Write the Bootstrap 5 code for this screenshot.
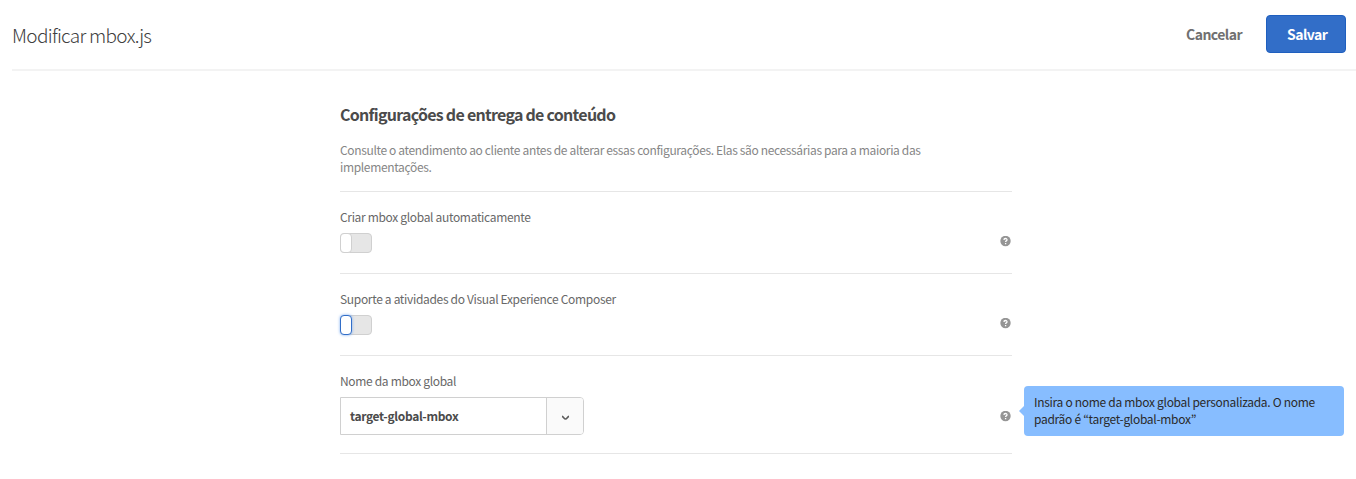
<!DOCTYPE html>
<html lang="pt-BR">
<head>
<meta charset="utf-8">
<meta name="viewport" content="width=device-width, initial-scale=1">
<title>Modificar mbox.js</title>
<link href="https://cdn.jsdelivr.net/npm/bootstrap@5.3.0/dist/css/bootstrap.min.css" rel="stylesheet">
<style>
body{font-family:"Noto Sans CJK JP","Open Sans",sans-serif;font-size:12px;line-height:17px;letter-spacing:-.33px;color:#686868;background:#fff;overflow:hidden}
.page-head{height:71px;margin-left:12px;border-bottom:2px solid #f3f3f3}
.page-title{font-size:19px;line-height:24px;font-weight:300;letter-spacing:-.68px;color:#404040}
.page-actions{height:38px;margin:0 10px 2px 0}
.page-head .btn{height:38px;font-size:14px;font-weight:700;line-height:20px;letter-spacing:-.55px;border-radius:4px;padding:0 20px}
.page-head .btn-plain{color:#707070;padding-right:24px}
.page-head .btn-save{width:80px;color:#fff;background:#326ec8;border:1px solid #1f5fbf}
.settings{width:672px;margin-left:340px;padding-top:31px}
.settings-title{font-size:16px;line-height:24px;font-weight:700;letter-spacing:-.73px;color:#4b4b4b}
.intro{width:600px;height:50px;margin-top:15px;letter-spacing:-.35px;color:#868686}
.setting{height:82px;border-top:1px solid #e6e6e6;padding-top:16px}
.setting-tall{height:99px;border-bottom:1px solid #e6e6e6}
.toggle{width:32px;height:20px;margin-top:8px;border:1px solid #d0d0d0;border-radius:4px;background:#e6e6e6}
.knob{width:12px;height:20px;margin:-1px;border:1px solid #d0d0d0;border-radius:4px;background:#fff}
.knob.active{border-color:#326ec8;box-shadow:0 0 3px #78aaf0}
.combo{width:244px;height:38px;margin-top:8px;border:1px solid #d0d0d0;border-radius:0 4px 4px 0}
.combo-text{padding:0 0 2px 9px;font-weight:700;color:#4b4b4b}
.combo-btn{width:37px;padding-top:3px;border-left:1px solid #d0d0d0;background:#fafafa;border-radius:0 3px 3px 0}
.help{width:11px;height:11px;margin:28px 1px 0 0}
.setting-tall .help{margin-top:39px}
.tip{left:684px;top:30px;width:320px;height:50px;padding:7px 10px;letter-spacing:-.3px;background:#87bdff;color:#2a2a2a;border-radius:4px}
.tip::before{content:"";position:absolute;left:-5px;top:20px;border:5px solid transparent;border-left:0;border-right-color:#87bdff}
</style>
</head>
<body>
<header class="page-head d-flex align-items-center justify-content-between">
  <h1 class="page-title mb-0">Modificar mbox.js</h1>
  <div class="page-actions d-flex">
    <button class="btn btn-plain border-0" type="button">Cancelar</button>
    <button class="btn btn-save" type="button">Salvar</button>
  </div>
</header>
<main class="settings">
  <h2 class="settings-title mb-0">Configurações de entrega de conteúdo</h2>
  <p class="intro mb-0">Consulte o atendimento ao cliente antes de alterar essas configurações. Elas são necessárias para a maioria das implementações.</p>
  <section class="setting d-flex justify-content-between">
    <div>Criar mbox global automaticamente<div class="toggle"><div class="knob"></div></div></div>
    <svg class="help" viewBox="0 0 11 11"><circle cx="5.5" cy="5" r="5.200" fill="#959595"/><path d="M3.900 3.900C4 2 7.200 2.100 7 3.900C6.900 4.800 5.600 4.800 5.600 6.100M5.600 7v1.300" fill="none" stroke="#fff" stroke-width="1.300"/></svg>
  </section>
  <section class="setting d-flex justify-content-between">
    <div>Suporte a atividades do Visual Experience Composer<div class="toggle"><div class="knob active"></div></div></div>
    <svg class="help" viewBox="0 0 11 11"><circle cx="5.5" cy="5" r="5.200" fill="#959595"/><path d="M3.900 3.900C4 2 7.200 2.100 7 3.900C6.900 4.800 5.600 4.800 5.600 6.100M5.600 7v1.300" fill="none" stroke="#fff" stroke-width="1.300"/></svg>
  </section>
  <section class="setting setting-tall position-relative d-flex justify-content-between">
    <div>Nome da mbox global
      <div class="combo d-flex">
        <div class="combo-text flex-grow-1 d-flex align-items-center">target-global-mbox</div>
        <div class="combo-btn d-flex align-items-center justify-content-center"><svg width="9" height="6" viewBox="0 0 9 6"><path d="M1 1.400C2.500 1.600 3 4 4.500 4S6.500 1.600 8 1.400" fill="none" stroke="#5c5c5c" stroke-width="1.600"/></svg></div>
      </div>
    </div>
    <svg class="help" viewBox="0 0 11 11"><circle cx="5.5" cy="5" r="5.200" fill="#959595"/><path d="M3.900 3.900C4 2 7.200 2.100 7 3.900C6.900 4.800 5.600 4.800 5.600 6.100M5.600 7v1.300" fill="none" stroke="#fff" stroke-width="1.300"/></svg>
    <div class="tip position-absolute" role="tooltip">Insira o nome da mbox global personalizada. O nome padrão é “target-global-mbox”</div>
  </section>
</main>
<script src="https://cdn.jsdelivr.net/npm/bootstrap@5.3.0/dist/js/bootstrap.bundle.min.js"></script>
</body>
</html>
